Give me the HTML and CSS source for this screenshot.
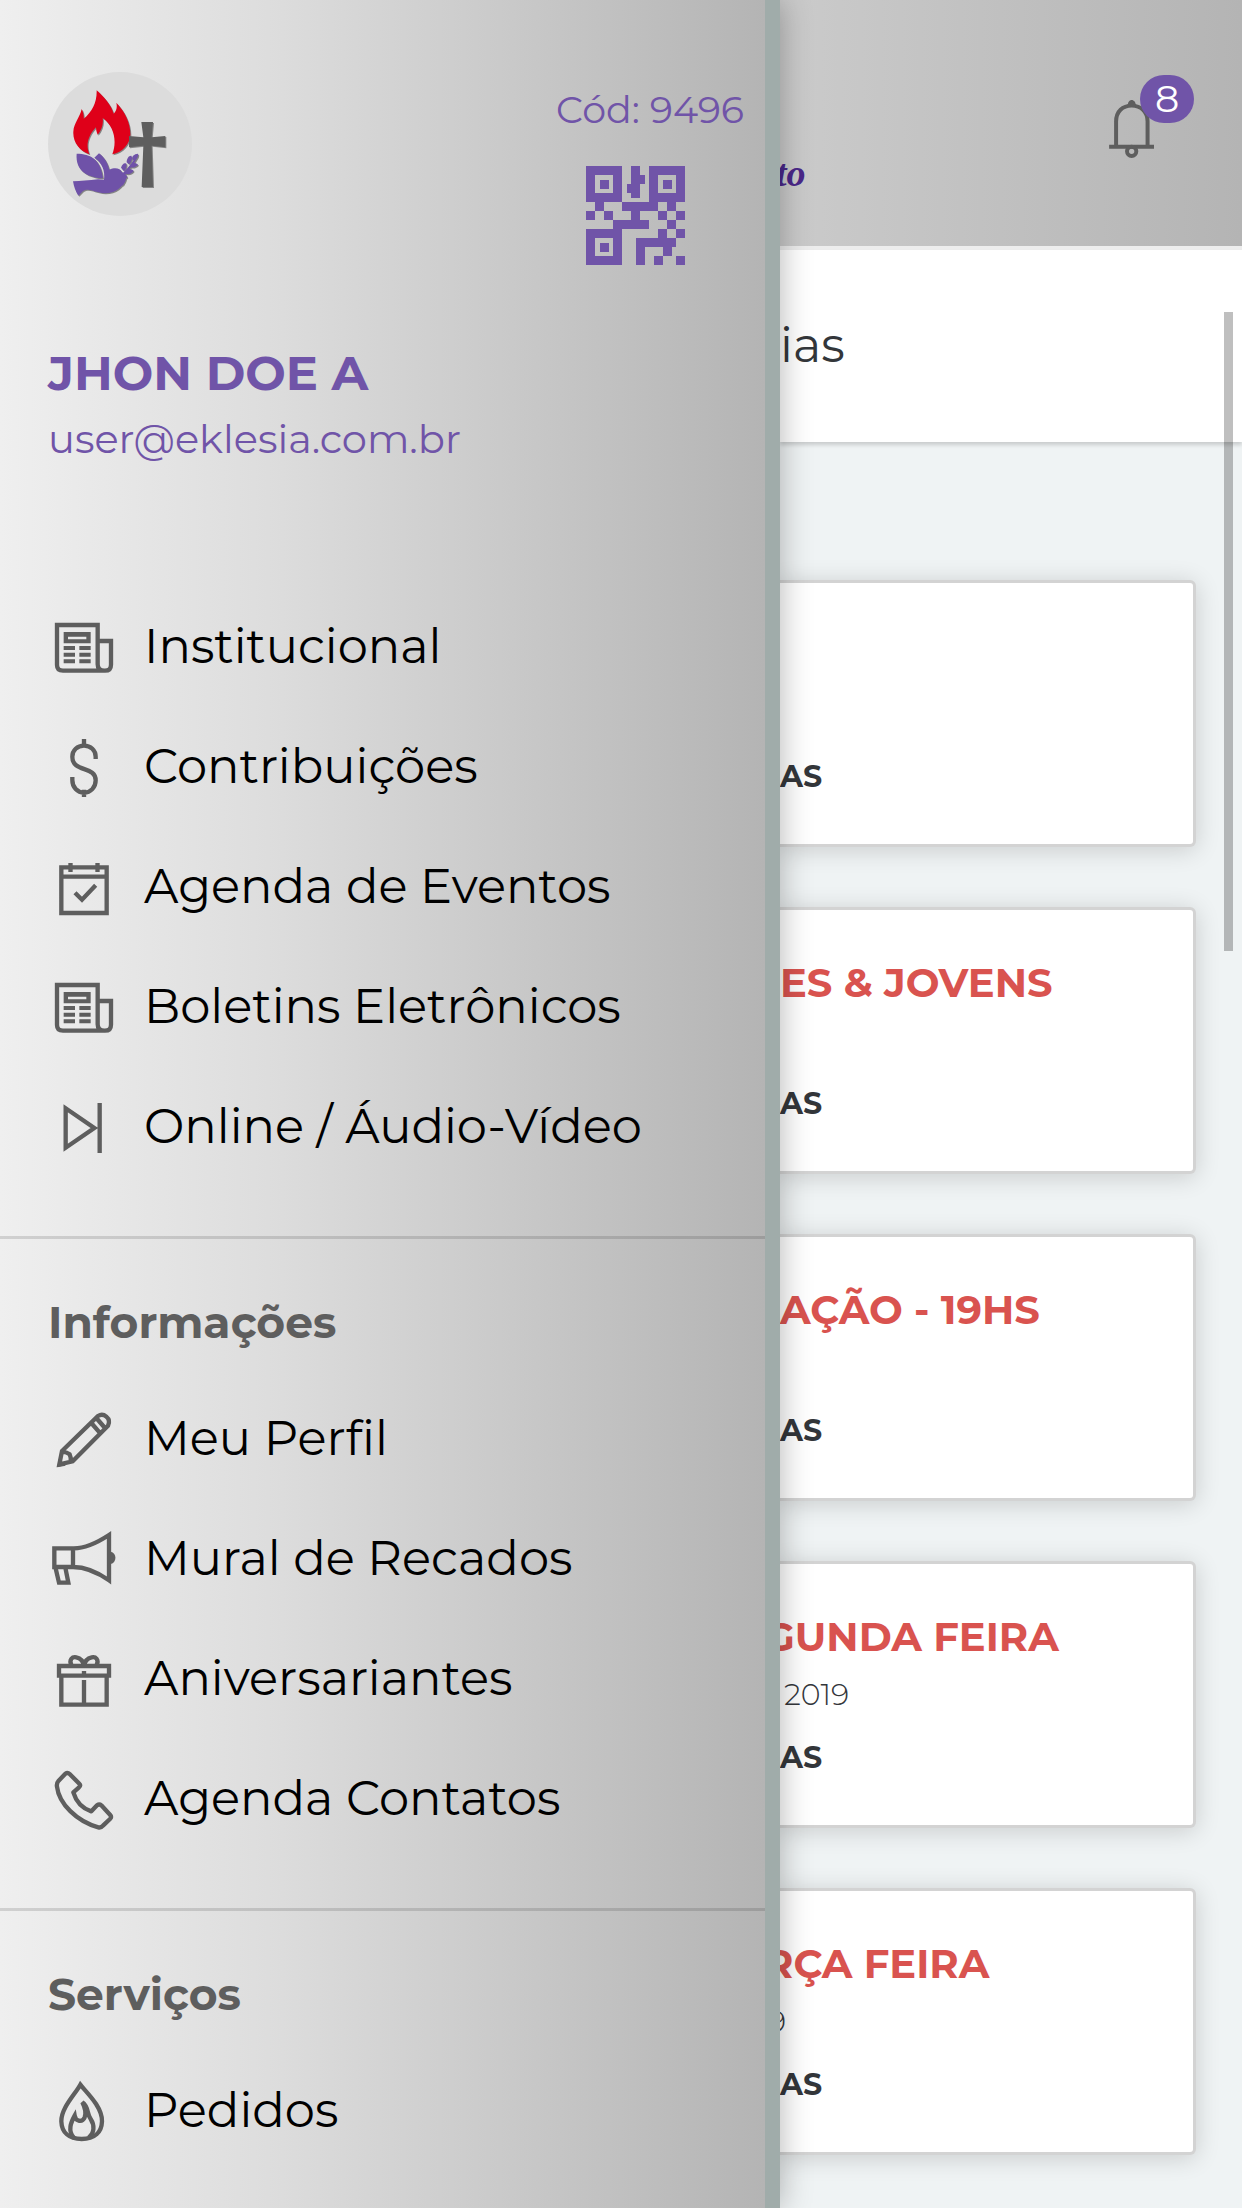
FILE: index.html
```html
<!DOCTYPE html>
<html lang="pt-BR">
<head>
<meta charset="utf-8">
<meta name="viewport" content="width=device-width, initial-scale=1">
<title>Eklesia</title>
<link rel="stylesheet" href="styles.css">
</head>
<body>
<svg class="symbols" aria-hidden="true">
  <symbol id="news" viewBox="54 33 216 216">
    <path class="line" d="M203 75H81v120q0 17 18 17h126q18 0 18-18v-71h-40z M203 123v70q0 19 20 19"/>
    <path class="fill" fill-rule="evenodd" d="M101 96h81v34h-81zM114 110v8h55v-8zM101 138h34v12h-34zM148 138h34v12h-34zM101 158h34v12h-34zM148 158h34v12h-34zM101 178h34v12h-34zM148 178h34v12h-34z"/>
  </symbol>
</svg>
<div class="app">
  <nav class="drawer">
    <header class="profile">
      <div class="profile-top">
        <svg class="avatar" viewBox="144 96 432 432" role="img" aria-label="Logo">
          <circle cx="360" cy="312" r="216" fill="#dcdcdc"/>
          <g class="mark">
            <path fill="#df0019" d="M290 151c22 19 44 45 51 70c9-8 11-21 8-33c26 27 43 62 42 97c-2 28-23 51-54 58c14-38 7-83-29-109c3 18-3 37-15 50c-3-7-5-14-5-22c-25 27-31 53-20 81c-30-10-50-37-48-68c1-26 20-43 25-68c5 9 7 19 6 29c25-20 40-49 39-85z"/>
            <path fill="#6f52a8" d="M230 341c42 1 72 16 79 74c-41-2-84-19-79-74z"/>
            <path fill="#6f52a8" d="M219 424c23-1 47-3 75-6l18 1c4-27-6-52-29-66l14-13c13 9 25 25 31 49c18-8 33-4 38 8c8 1 13 8 16 15l-4 4c-10 31-44 51-83 41c-21-6-34-12-46-4l-14 14c-9-13-13-27-16-43z"/>
            <path fill="#6f52a8" d="M365 404c15-16 28-31 44-55l4 3c-12 22-26 40-43 56zM363 383c4-11 10-16 16-12c2 8-1 17-7 23zM380 367c0-12 7-21 14-20c5 9 0 20-7 26zM397 357c-2-8 5-15 17-16c3 10-6 20-14 20zM390 374c7-7 19-6 24 0c-6 8-18 11-26 6zM376 391c9-7 21-5 25 2c-8 11-21 12-28 7zM367 405l11 5-2 14-8 14-4-15z"/>
            <path fill="#5e5e5e" d="M424 246h35l-4 46 41-4v34l-41-5 4 124h-34l5-124-43 5v-34l43 4z"/>
          </g>
        </svg>
        <div class="code">
          <span class="code-text">Cód: 9496</span>
          <svg class="qr" viewBox="0 0 22 22" role="img" aria-label="QR code" shape-rendering="crispEdges">
            <path fill="#7054a8" fill-rule="evenodd" d="M0 0h8v8h-8zM2 2v4h4v-4zM3 3h2v2h-2z M14 0h8v8h-8zM16 2v4h4v-4zM17 3h2v2h-2z M0 14h8v8h-8zM2 16v4h4v-4zM3 17h2v2h-2z M10 0h2v2h1v2h-1v3h-2v-1h-1v-2h1z M2 8h2v2h-2zM8 8h8v2h-8zM18 8h2v2h-2z M0 10h2v2h-2zM4 10h2v2h-2zM10 10h2v2h-2zM16 10h2v2h-2zM20 10h2v2h-2z M6 12h8v2h-8zM18 12h2v2h-2z M16 14h2v2h-2zM20 14h2v2h-2z M11 16h9v2h-1v2h-2v-2h-4v4h-2z M15 20h2v2h-2zM20 20h2v2h-2z"/>
          </svg>
        </div>
      </div>
      <h1 class="name">JHON DOE A</h1>
      <p class="email">user@eklesia.com.br</p>
    </header>

    <ul class="menu">
      <li><a class="item" href="#"><svg class="icon"><use href="#news"/></svg><span class="label">Institucional</span></a></li>
      <li><a class="item" href="#"><svg class="icon" viewBox="54 393 216 216"><path class="line" d="M162 417v22M162 569v22M197 477v-7c0-19-15-33-35-33s-35 14-35 33c0 49 70 26 70 71c0 21-15 37-35 37s-35-16-35-38v-9"/></svg><span class="label">Contribuições</span></a></li>
      <li><a class="item" href="#"><svg class="icon" viewBox="54 753 216 216"><path class="line" d="M94 802h136v137H94zM94 830h136M135 878l21 21 41-43"/><path class="fill" d="M115 789h13v27h-13zM196 789h13v27h-13z"/></svg><span class="label">Agenda de Eventos</span></a></li>
      <li><a class="item" href="#"><svg class="icon"><use href="#news"/></svg><span class="label">Boletins Eletrônicos</span></a></li>
      <li><a class="item" href="#"><svg class="icon" viewBox="54 393 216 216"><path class="line" d="M107 445v118l86-59zM209 429v150"/></svg><span class="label">Online / Áudio-Vídeo</span></a></li>
    </ul>

    <section class="group">
      <h2 class="group-title">Informações</h2>
      <ul class="menu">
        <li><a class="item" href="#"><svg class="icon" viewBox="54 69 216 216"><path class="line" d="M96 213L204 108q13-8 25 2q13 11 5 27L128 244l-40 9zM184 129l27 31M199 114l26 30M96 216q10-2 23 7q5 11 3 21"/><path class="fill" d="M82 262l4-25 21 20z"/></svg><span class="label">Meu Perfil</span></a></li>
        <li><a class="item" href="#"><svg class="icon" viewBox="54 429 216 216"><path class="line" d="M73 505h56v56H73zM129 505c40 1 79-21 108-40v136c-34-24-68-40-108-40M76 561l11 47h28l-9-45"/><path class="fill" d="M242 515c19 4 19 32 0 37z"/></svg><span class="label">Mural de Recados</span></a></li>
        <li><a class="item" href="#"><svg class="icon" viewBox="54 69 216 216"><path class="line" d="M87 138h150v29H87zM94 167v87h136v-87M162 180v74M162 153v11M125 137c-10-19 3-28 14-25c13 3 21 13 23 25M199 137c10-19-3-28-14-25c-13 3-21 13-23 25"/></svg><span class="label">Aniversariantes</span></a></li>
        <li><a class="item" href="#"><svg class="icon" viewBox="54 429 216 216"><path class="line" stroke-linejoin="round" d="M106 461q7-5 13 1l29 29q5 5-1 11l-17 15c8 27 27 48 54 57l17-18q7-5 13 0l26 28q6 7 0 13l-21 20q-6 7-14 5C140 604 87 551 81 500q-2-10 5-18z"/></svg><span class="label">Agenda Contatos</span></a></li>
      </ul>
    </section>

    <section class="group">
      <h2 class="group-title">Serviços</h2>
      <ul class="menu">
        <li><a class="item" href="#"><svg class="icon" viewBox="54 585 216 216"><path class="line" d="M151 614c15 20 66 65 65 110c-1 32-22 53-61 53s-60-21-61-53c-1-40 42-82 57-110z"/><path class="line" d="M132 774c-20-22-9-47 2-67c3 18 23 21 30 5c4-11 2-27-7-45c20 14 12 32 25 50c13 20 11 42-6 56"/></svg><span class="label">Pedidos</span></a></li>
      </ul>
    </section>
  </nav>

  <main class="content">
    <header class="topbar">
      <span class="brand">to</span>
      <button class="bell" type="button" aria-label="Notificações">
        <svg class="bell-icon" viewBox="147 180 135 175"><path d="M168 320v-75c0-31 20-48 47-48s48 17 48 48v75M147 321h136" fill="none" stroke="#5e5e5e" stroke-width="12"/><circle cx="215" cy="335" r="14" fill="none" stroke="#5e5e5e" stroke-width="12"/><path d="M203 201c-2-28 26-28 25 0z" fill="#5e5e5e"/></svg>
        <span class="badge">8</span>
      </button>
    </header>
    <div class="heading">ias</div>
    <div class="cards">
      <article class="card"><h3 class="title"></h3><p class="date"></p><p class="more">AS</p></article>
      <article class="card"><h3 class="title">ES &amp; JOVENS</h3><p class="date"></p><p class="more">AS</p></article>
      <article class="card"><h3 class="title">AÇÃO - 19HS</h3><p class="date"></p><p class="more">AS</p></article>
      <article class="card"><h3 class="title under">GUNDA FEIRA</h3><p class="date">2019</p><p class="more">AS</p></article>
      <article class="card"><h3 class="title under">RÇA FEIRA</h3><p class="date under">9</p><p class="more">AS</p></article>
    </div>
    <div class="scroll-thumb"></div>
  </main>
</div>
</body>
</html>
```
FILE: styles.css
```css
* { box-sizing: border-box; }

body {
  margin: 0;
  font-family: Montserrat, Inter, "Open Sans", sans-serif;
  font-weight: 400;
  font-variant-ligatures: none;
  background: #eff3f4;
}

h1, h2, h3, p, ul { margin: 0; padding: 0; }
ul { list-style: none; }

.symbols { position: absolute; width: 0; height: 0; }

.app {
  display: flex;
  min-height: 100vh;
  overflow: hidden;
}

/* Side drawer */
.drawer {
  flex: 0 0 780px;
  z-index: 1;
  border-right: 15px solid #a0acaa;
  background: linear-gradient(90deg, #efefef, #dcdcdc 37%, #b4b4b4);
  box-shadow: 0 0 30px rgba(0, 0, 0, 0.3);
}

.profile {
  padding: 72px 21px 103px 48px;
  color: #7054a8;
}

.profile-top {
  display: flex;
  justify-content: space-between;
  height: 254px;
}

.avatar { width: 144px; height: 144px; }
.mark { filter: drop-shadow(3px 3px 2px rgba(0, 0, 0, 0.4)); }

.code {
  display: flex;
  flex-direction: column;
  align-items: center;
  gap: 18px;
}

.code-text { font-size: 38px; line-height: 76px; }
.qr { width: 99px; height: 99px; margin-right: 30px; }

.name { font-size: 48px; line-height: 94px; font-weight: 700; }
.email { font-size: 40px; line-height: 38px; padding-bottom: 26px; }

.item {
  display: flex;
  align-items: center;
  gap: 24px;
  height: 120px;
  padding-left: 48px;
  font-size: 48px;
  color: #000;
  text-decoration: none;
}

.label { padding-bottom: 2px; }

.icon { width: 72px; height: 72px; }
.line { fill: none; stroke: #5e5e5e; stroke-width: 13; }
.fill { fill: #5e5e5e; }

.group {
  margin-top: 49px;
  padding-top: 27px;
  border-top: 3px solid rgba(0, 0, 0, 0.13);
}

.group-title {
  padding-left: 48px;
  padding-bottom: 1px;
  font-size: 44px;
  line-height: 112px;
  font-weight: 700;
  color: #5e5e5e;
}

/* Page behind the drawer */
.content {
  position: relative;
  flex: 1;
  min-width: 0;
  color: #33363a;
}

.topbar {
  display: flex;
  justify-content: space-between;
  height: 250px;
  padding: 75px 48px 0 0;
  border-bottom: 4px solid #ededed;
  background: linear-gradient(90deg, #cbcbcb, #b4b4b4);
}

.brand {
  padding-top: 74px;
  margin-left: -4px;
  font: italic 700 38px/48px "Liberation Sans Narrow", "Liberation Serif", serif;
  color: #4a2789;
}

.bell {
  display: flex;
  align-items: flex-start;
  height: 84px;
  padding: 0;
  border: 0;
  background: none;
  font: inherit;
}

.bell-icon { width: 45px; height: 58px; margin-top: 25px; }

.badge {
  width: 54px;
  height: 48px;
  margin-left: -14px;
  border-radius: 24px;
  background: #7054a8;
  color: #fff;
  font-size: 38px;
  line-height: 48px;
}

.heading {
  height: 192px;
  font-size: 48px;
  line-height: 190px;
  background: #fff;
  box-shadow: 0 3px 4px rgba(0, 0, 0, 0.16);
}

.cards {
  display: grid;
  gap: 60px;
  padding: 138px 46px 50px 0;
}

.card {
  display: grid;
  grid-template-rows: 54px 62px 64px;
  height: 267px;
  padding-top: 46px;
  border: 3px solid #d3d3d3;
  border-left: 0;
  border-radius: 0 6px 6px 0;
  background: #fff;
  box-shadow: 0 3px 24px rgba(0, 0, 0, 0.16);
}

.title { font-size: 40px; line-height: 54px; font-weight: 700; color: #d9534f; }
.date { padding-left: 4px; font-size: 30px; line-height: 62px; font-weight: 300; }
.more { font-size: 30px; line-height: 64px; font-weight: 700; }
.under { margin-left: -16px; }

.scroll-thumb {
  position: absolute;
  top: 312px;
  right: 9px;
  width: 9px;
  height: 639px;
  background: rgba(0, 0, 0, 0.25);
}
```
